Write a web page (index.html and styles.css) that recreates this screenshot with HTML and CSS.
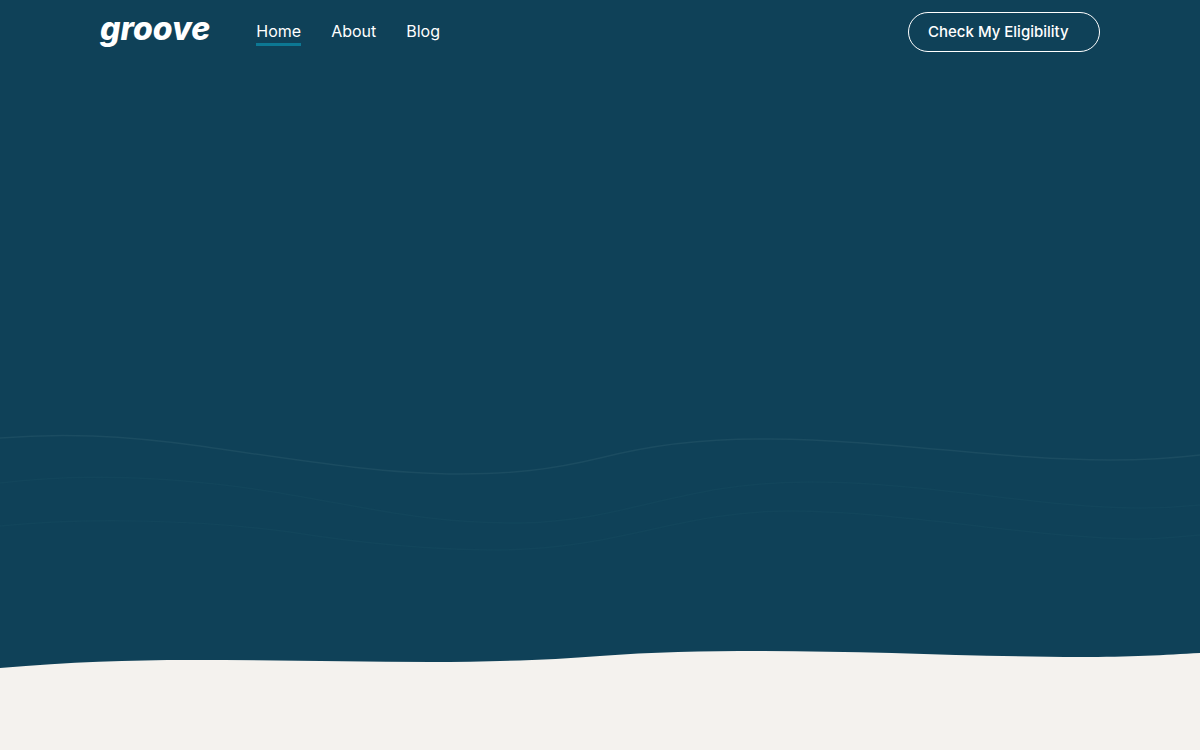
FILE: index.html
```
<!DOCTYPE html>
<html lang="en">
<head>
    <meta charset="utf-8">
    <meta name="viewport" content="width=device-width, initial-scale=1">
    <title>Groove</title>
    <link rel="stylesheet" href="styles.css">
</head>
<body>
    <header class="header">
        <a class="logo" href="#">groove</a>
        <nav class="nav">
            <a class="nav-link active" href="#">Home</a>
            <a class="nav-link" href="#">About</a>
            <a class="nav-link" href="#">Blog</a>
        </nav>
        <button class="btn-eligibility" type="button">Check My Eligibility</button>
    </header>

    <main class="hero">
        <svg class="waves" viewBox="0 0 1200 260" preserveAspectRatio="none" aria-hidden="true">
            <!-- thin background lines -->
            <path class="line" d="M0 28 C60 23 120 25 200 36 C310 52 385 64 460 64 C510 64 550 60 600 48 C650 35 705 28 770 29 C890 30 1000 50 1110 50 C1150 50 1175 48 1200 45"/>
            <path class="line faint" d="M0 73 C100 61 200 70 280 83 C370 98 430 114 520 113 C630 111 680 72 810 72 C930 72 1040 98 1140 98 C1165 98 1180 97 1200 95"/>
            <path class="line faint" d="M0 116 C90 107 200 110 290 122 C365 134 430 140 500 140 C620 139 680 101 790 101 C900 101 1040 129 1140 129 C1165 129 1180 127 1200 125"/>
            <!-- edge of the next section -->
            <path class="edge" d="M0 258 C70 252 130 250 190 250 C270 250 350 252 430 252 C490 252 550 250 600 246 C650 242 705 241 760 241 C870 241 980 247 1080 247 C1130 247 1165 245 1200 243 V260 H0 Z"/>
        </svg>
    </main>
</body>
</html>
```

FILE: styles.css
```
* {
    margin: 0;
    padding: 0;
    box-sizing: border-box;
}

body {
    min-height: 100vh;
    display: flex;
    flex-direction: column;
    background-color: #f4f2ee;
    color: #fff;
    font-family: Inter, "Liberation Sans", sans-serif;
    font-size: 16px;
    line-height: 24px;
    padding-bottom: 80px;
}

a {
    color: inherit;
    text-decoration: none;
}

.header {
    display: flex;
    align-items: center;
    min-height: 64px;
    padding: 0 100px;
    background: #0f4158;
}

.logo {
    font-size: 32px;
    font-weight: 800;
    font-style: italic;
    line-height: 40px;
    padding-bottom: 6px;
}

.nav {
    display: flex;
    gap: 30px;
    margin-left: 46px;
}

.nav-link {
    border-bottom: 3px solid transparent;
}

.nav-link.active {
    border-color: #0c7894;
}

.btn-eligibility {
    width: 192px;
    height: 40px;
    margin-left: auto;
    padding: 0 19px;
    background: transparent;
    border: 1px solid #fff;
    border-radius: 20px;
    color: #fff;
    font: inherit;
    font-size: 15px;
    font-weight: 500;
    text-align: left;
    white-space: nowrap;
    cursor: pointer;
}

.hero {
    flex: 1;
    display: flex;
    flex-direction: column;
    justify-content: flex-end;
    background: #0f4158;
}

.waves {
    display: block;
    width: 100%;
    height: 260px;
}

.line {
    fill: none;
    stroke: #1b4c61;
    stroke-width: 1.5;
}

.line.faint {
    stroke: #12455b;
}

.edge {
    fill: #f4f2ee;
}
```
